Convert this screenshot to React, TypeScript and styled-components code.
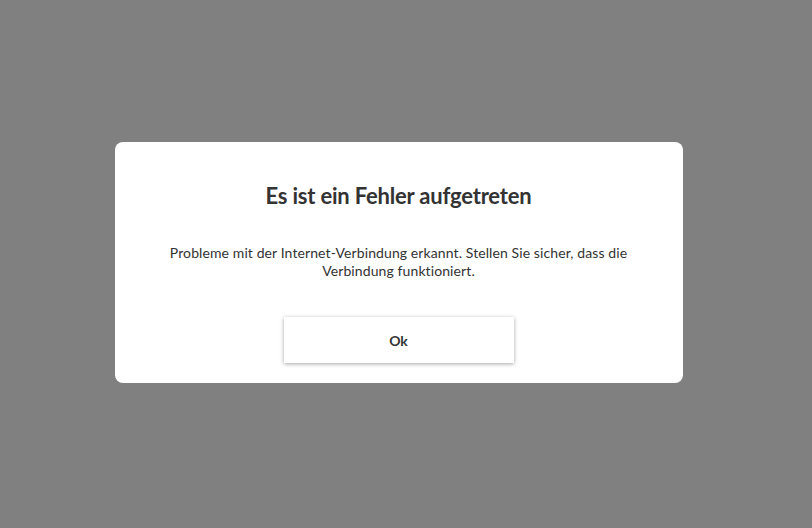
import React from "react";
import styled, { createGlobalStyle } from "styled-components";

const GlobalStyle = createGlobalStyle`
  html, body {
    margin: 0;
    padding: 0;
    height: 100%;
  }
  body {
    font-family: Lato, "Open Sans", "Liberation Sans", sans-serif;
    font-variant-ligatures: none;
    color: #333;
  }
  #root {
    height: 100%;
  }
`;

// the right padding stands in for the scrollbar gutter of the original page
const Overlay = styled.div`
  height: 100vh;
  box-sizing: border-box;
  padding-right: 15px;
  background: #808080;
  display: flex;
  align-items: center;
  justify-content: center;
`;

const Dialog = styled.div`
  width: 568px;
  box-sizing: border-box;
  background: #fff;
  border-radius: 8px;
  padding: 40px 50px 20px;
  display: flex;
  flex-direction: column;
  align-items: center;
  text-align: center;
  margin-top: -3px;
`;

const Title = styled.h2`
  margin: 0;
  font-size: 22px;
  line-height: 28px;
  font-weight: 700;
  letter-spacing: -0.2px;
  color: #333;
`;

const Message = styled.p`
  margin: 34px 0 0;
  font-size: 14px;
  line-height: 18px;
  letter-spacing: 0.1px;
  color: #333;
`;

const OkButton = styled.button`
  margin-top: 37px;
  width: 230px;
  height: 46px;
  border: none;
  background: #fff;
  box-shadow: 0 1px 4px rgba(0, 0, 0, 0.35);
  font-family: inherit;
  font-size: 14px;
  font-weight: 700;
  color: #333;
  cursor: pointer;
`;

export default function App() {
  return (
    <>
      <GlobalStyle />
      <Overlay>
        <Dialog>
          <Title>Es ist ein Fehler aufgetreten</Title>
          <Message>
            Probleme mit der Internet-Verbindung erkannt. Stellen Sie sicher,
            dass die Verbindung funktioniert.
          </Message>
          <OkButton>Ok</OkButton>
        </Dialog>
      </Overlay>
    </>
  );
}
